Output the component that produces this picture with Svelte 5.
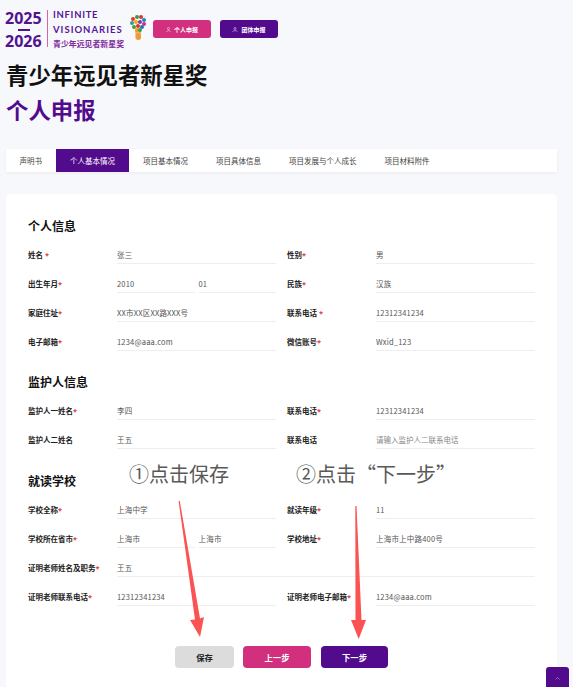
<script>
  let tabs = ["声明书", "个人基本情况", "项目基本情况", "项目具体信息", "项目发展与个人成长", "项目材料附件"];
  let active = $state(1);

  const personal = [
    { label: "姓名", star: " *", value: "张三" },
    { label: "性别", star: "*", value: "男" },
    { label: "出生年月", star: "*", value: "2010", second: "01" },
    { label: "民族", star: "*", value: "汉族" },
    { label: "家庭住址", star: "*", value: "XX市XX区XX路XXX号" },
    { label: "联系电话", star: " *", value: "12312341234" },
    { label: "电子邮箱", star: "*", value: "1234@aaa.com" },
    { label: "微信账号", star: "*", value: "Wxid_123" }
  ];
  const guardian = [
    { label: "监护人一姓名", star: "*", value: "李四" },
    { label: "联系电话", star: "*", value: "12312341234" },
    { label: "监护人二姓名", star: "", value: "王五" },
    { label: "联系电话", star: "", value: "", placeholder: "请输入监护人二联系电话" }
  ];
  const school = [
    { label: "学校全称", star: "*", value: "上海中学" },
    { label: "就读年级", star: "*", value: "11" },
    { label: "学校所在省市", star: "*", value: "上海市", second: "上海市" },
    { label: "学校地址", star: "*", value: "上海市上中路400号" },
    { label: "证明老师姓名及职务", star: "*", value: "王五", wide: true },
    { label: "证明老师联系电话", star: "*", value: "12312341234" },
    { label: "证明老师电子邮箱", star: "*", value: "1234@aaa.com" }
  ];
  const sections = [
    { title: "个人信息", rows: personal },
    { title: "监护人信息", rows: guardian },
    { title: "就读学校", rows: school }
  ];
  const leaves = [
    [133, 19, "#e0392f"], [137, 17, "#3c9a4a"], [141, 17, "#d9352f"], [144, 20, "#2a7fc0"],
    [132, 23, "#2f9e8f"], [136, 22, "#f0a81e"], [140, 22, "#7a3fa0"], [144, 24, "#cf2f7f"],
    [134, 27, "#4a9a3f"], [138, 26, "#d8332f"], [142, 27, "#2a6fb8"], [137, 30, "#e8a020"], [140, 30, "#35a05a"]
  ];
</script>

<div class="page">
  <header class="top">
    <div class="years">
      <span>2025</span>
      <i></i>
      <span>2026</span>
    </div>
    <div class="brand">
      <span class="en first">INFINITE</span>
      <span class="en">VISIONARIES</span>
      <span class="zh">青少年远见者新星奖</span>
    </div>
    <svg class="bulb" viewBox="130 15 17 26" width="17" height="26" aria-hidden="true">
      <path d="M135 30 L141 30 L141 35 L135.500 35 Z" fill="#f0b060" />
      <rect x="135.500" y="33" width="5.500" height="7" rx="2.700" fill="#ee9a3a" />
      {#each leaves as l}
        <circle cx={l[0]} cy={l[1]} r="2" fill={l[2]} />
      {/each}
    </svg>
    <button class="head-btn pink">
      <svg viewBox="0 0 10 10" width="5" height="5"><circle cx="5" cy="3" r="2" fill="none" stroke="#fff" /><path d="M1 9.500c.5-3 7.500-3 8 0" fill="none" stroke="#fff" /></svg>
      个人申报
    </button>
    <button class="head-btn purple">
      <svg viewBox="0 0 12 10" width="6" height="5"><circle cx="6" cy="3" r="2" fill="none" stroke="#fff" /><path d="M1 9.500c.5-3 9.500-3 10 0" fill="none" stroke="#fff" /></svg>
      团体申报
    </button>
  </header>

  <h1>青少年远见者新星奖</h1>
  <h2 class="sub">个人申报</h2>

  <nav class="tabs">
    {#each tabs as tab, i}
      <button class="tab" class:on={active === i} onclick={() => (active = i)}>{tab}</button>
    {/each}
  </nav>

  <main class="card">
    {#each sections as section}
      <section>
        <h3>{section.title}</h3>
        <div class="grid">
          {#each section.rows as row}
            <div class="row" class:wide={row.wide}>
              <span class="label">{row.label}<em>{row.star}</em></span>
              <div class="fields">
                <span class="field" class:ph={row.placeholder}>{row.value || row.placeholder}</span>
                {#if row.second}
                  <span class="field">{row.second}</span>
                {/if}
              </div>
            </div>
          {/each}
        </div>
      </section>
    {/each}

    <div class="actions">
      <button class="act save">保存</button>
      <button class="act prev">上一步</button>
      <button class="act next">下一步</button>
    </div>
  </main>

  <div class="note n1">①点击保存</div>
  <div class="note n2">②点击“下一步”</div>
  <svg class="arrows" viewBox="0 0 573 687" aria-hidden="true">
    <path d="M178.600 501 L179.800 501 L200 618.500 L204 617 L200 637 L190 620 L195 619.500 Z" fill="#fb5252" />
    <path d="M355.300 506 L356.500 506 L361.500 620 L366 620 L358.700 639 L351 620 L355.500 620 Z" fill="#fb5252" />
  </svg>

  <button class="totop" aria-label="回到顶部">
    <svg viewBox="0 0 10 6" width="5" height="3"><path d="M1 5l4-4 4 4" fill="none" stroke="#b9a0d4" stroke-width="1.200" /></svg>
  </button>
</div>

<style>
  :global(html), :global(body) {
    margin: 0;
    overflow: hidden;
  }

  .page {
    position: relative;
    height: 687px;
    overflow: hidden;
    background: #f7f8fb;
    font-family: "Noto Sans", "Noto Sans CJK SC", sans-serif;
    color: #111;
  }

  button {
    font-family: inherit;
    cursor: pointer;
    padding: 0;
  }

  .top {
    display: flex;
    align-items: flex-start;
    height: 50px;
    padding: 10px 0 0 5px;
    box-sizing: border-box;
  }

  .years {
    display: flex;
    flex-direction: column;
    width: 37px;
    color: #53128f;
    font-size: 16px;
    font-weight: 700;
    line-height: 17px;
  }

  .years i {
    display: block;
    width: 12px;
    height: 2px;
    margin: 2px auto 2px;
    background: #53128f;
  }

  .brand {
    display: flex;
    flex-direction: column;
    height: 37px;
    margin-left: 5px;
    padding-left: 5px;
    border-left: 1px solid #d9659f;
    color: #55169a;
    width: 77px;
  }

  .en {
    font-family: "Lato", sans-serif;
    font-size: 9.500px;
    font-weight: 700;
    letter-spacing: 1px;
    line-height: 14px;
  }

  .first {
    line-height: 10px;
    margin-bottom: 3px;
    letter-spacing: 0.700px;
  }

  .zh {
    font-size: 7.900px;
    font-weight: 700;
    line-height: 12px;
    margin-top: 1px;
    white-space: nowrap;
    color: #7f2a9c;
  }

  .bulb {
    margin: 5px 0 0 0;
  }

  .head-btn {
    display: flex;
    align-items: center;
    justify-content: center;
    gap: 3px;
    width: 58px;
    height: 18px;
    margin-top: 10px;
    border: 0;
    border-radius: 3px;
    color: #fff;
    font-size: 6px;
    font-weight: 700;
  }

  .pink {
    margin-left: 6px;
    background: #d22f7f;
  }

  .purple {
    margin-left: 9px;
    background: #520b8d;
  }

  h1, .sub {
    margin: 0;
    padding-left: 6px;
    font-size: 22.400px;
    font-weight: 700;
  }

  h1 {
    margin-top: 10px;
    line-height: 32px;
  }

  .sub {
    line-height: 38px;
    color: #520b8d;
  }

  .tabs {
    display: flex;
    width: 551px;
    height: 23px;
    margin: 19px 0 0 6px;
    background: #fff;
    box-shadow: 0 1px 3px rgba(0, 0, 0, 0.06);
  }

  .tab {
    padding: 0 14px;
    border: 0;
    background: none;
    font-size: 7.500px;
    color: #444;
  }

  .tab:first-child {
    padding-left: 13.500px;
  }

  .tab.on {
    background: #520b8d;
    color: #fff;
  }

  .card {
    width: 551px;
    margin: 22px 0 0 6px;
    padding: 24px 22px 30px 22px;
    box-sizing: border-box;
    background: #fff;
    border-radius: 5px;
  }

  section + section {
    margin-top: 23px;
  }

  section:nth-of-type(3) {
    margin-top: 24px;
  }

  h3 {
    margin: 0;
    font-size: 12px;
    font-weight: 700;
    line-height: 17px;
  }

  .grid {
    display: grid;
    grid-template-columns: 248px 248px;
    column-gap: 11px;
  }

  .row {
    display: flex;
    align-items: stretch;
    height: 29px;
    font-size: 7.500px;
  }

  .row.wide {
    grid-column: 1 / 3;
  }

  .label {
    flex: none;
    width: 89px;
    padding-top: 15px;
    line-height: 10px;
    font-weight: 700;
    color: #222;
    white-space: pre;
  }

  .label em {
    font-style: normal;
    color: #e4393c;
  }

  .fields {
    flex: 1;
    display: flex;
    gap: 4px;
  }

  .field {
    flex: 1;
    box-sizing: border-box;
    height: 29px;
    padding-top: 15px;
    line-height: 10px;
    font-family: "Noto Sans CJK SC", sans-serif;
    color: #555;
    letter-spacing: 0.200px;
    border-bottom: 1px solid #eceef0;
    white-space: nowrap;
  }

  .ph {
    color: #888;
    letter-spacing: 0;
  }

  .actions {
    display: flex;
    justify-content: center;
    gap: 9px;
    margin-top: 40px;
  }

  .act {
    height: 22px;
    border: 0;
    border-radius: 4px;
    font-size: 8.300px;
    font-weight: 700;
    color: #fff;
  }

  .save {
    width: 59px;
    background: #dcdcdc;
    color: #222;
  }

  .prev {
    width: 68px;
    background: #d22f7f;
  }

  .next {
    width: 67px;
    margin-left: 1px;
    background: #520b8d;
  }

  .note {
    position: absolute;
    top: 460px;
    font-family: "Noto Sans CJK SC", sans-serif;
    font-size: 20px;
    line-height: 28px;
    color: #595959;
    white-space: nowrap;
  }

  .n1 {
    left: 129px;
  }

  .n2 {
    left: 296px;
  }

  .arrows {
    position: absolute;
    inset: 0;
    width: 573px;
    height: 687px;
    pointer-events: none;
  }

  .totop {
    position: fixed;
    left: 546px;
    top: 667px;
    width: 23px;
    height: 23px;
    border: 0;
    border-radius: 3px;
    background: #520b8d;
    display: flex;
    justify-content: center;
    align-items: center;
  }
</style>
